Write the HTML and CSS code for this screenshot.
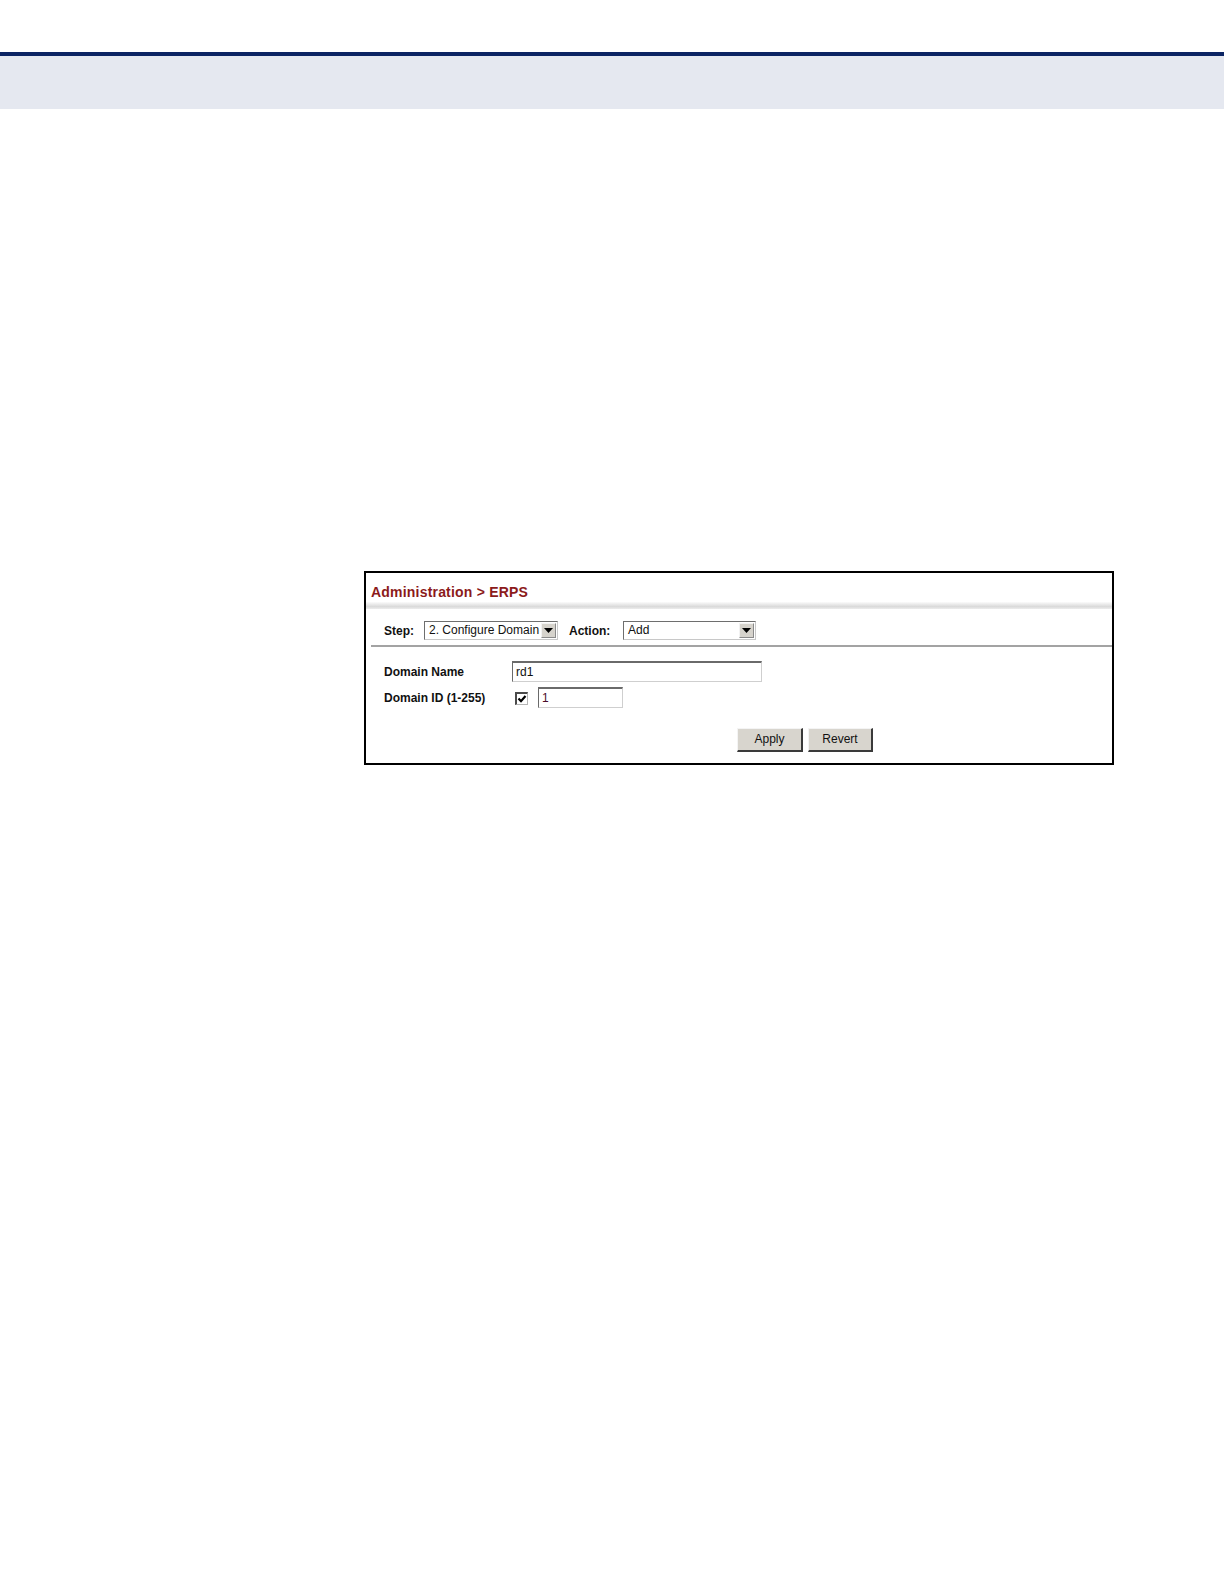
FILE: index.html
```html
<!DOCTYPE html>
<html>
<head>
<meta charset="utf-8">
<title>Administration &gt; ERPS</title>
<link rel="stylesheet" href="styles.css">
</head>
<body>
<div class="page-header"></div>
<div class="figure">
  <div class="title">Administration &gt; ERPS</div>
  <div class="title-shade"></div>
  <div class="step-row">
    <span class="lbl step-lbl">Step:</span>
    <div class="select sel-step">
      <span class="sel-text">2. Configure Domain</span>
      <span class="sel-arrow"><svg width="9" height="5" viewBox="0 0 9 5"><path d="M0 0H9L4.5 5Z" fill="#000"/></svg></span>
    </div>
    <span class="lbl action-lbl">Action:</span>
    <div class="select sel-action">
      <span class="sel-text">Add</span>
      <span class="sel-arrow"><svg width="9" height="5" viewBox="0 0 9 5"><path d="M0 0H9L4.5 5Z" fill="#000"/></svg></span>
    </div>
  </div>
  <div class="sep"></div>
  <div class="form">
    <div class="row">
      <span class="lbl field-lbl">Domain Name</span>
      <div class="input inp-name">rd1</div>
    </div>
    <div class="row row-id">
      <span class="lbl field-lbl">Domain ID (1-255)</span>
      <span class="check"><svg width="10" height="10" viewBox="0 0 10 10"><path d="M1.5 4.5L4 7.2L8.5 2" fill="none" stroke="#000" stroke-width="2.2"/></svg></span>
      <div class="input inp-id">1</div>
    </div>
  </div>
  <div class="buttons">
    <div class="btn btn-apply">Apply</div>
    <div class="btn btn-revert">Revert</div>
  </div>
</div>
</body>
</html>
```
FILE: styles.css
```css
html, body {
  margin: 0;
  padding: 0;
  background: #fff;
  font-family: "Liberation Sans", Arial, sans-serif;
}
.page-header {
  margin-top: 52px;
  border-top: 4px solid #0b2463;
  height: 53px;
  background: #e5e8f0;
}
.figure {
  box-sizing: border-box;
  margin-top: 462px;
  margin-left: 364px;
  width: 750px;
  height: 194px;
  border: 2px solid #000;
  display: flex;
  flex-direction: column;
}
.title {
  padding: 11px 0 0 5px;
  height: 18px;
  font-size: 14px;
  line-height: 17px;
  font-weight: bold;
  letter-spacing: 0.2px;
  color: #8b1a1a;
}
.title-shade {
  height: 7px;
  background: linear-gradient(#fbfbfb, #dadada 65%, #ececec);
}
.step-row {
  display: flex;
  align-items: center;
  padding: 12px 0 5px 18px;
  height: 19px;
}
.lbl {
  font-size: 12px;
  font-weight: bold;
  color: #111;
}
.step-lbl { width: 40px; }
.select {
  box-sizing: border-box;
  height: 19px;
  display: flex;
  align-items: stretch;
  border-top: 1px solid #6e6e6e;
  border-left: 1px solid #6e6e6e;
  border-right: 1px solid #c8c8c8;
  border-bottom: 1px solid #c8c8c8;
  background: #fff;
}
.sel-step { width: 134px; }
.sel-action { width: 133px; }
.sel-text {
  flex: 1;
  font-size: 12px;
  line-height: 16px;
  padding-left: 4px;
  color: #111;
  white-space: nowrap;
  overflow: hidden;
}
.sel-arrow {
  width: 15px;
  margin: 1px;
  display: flex;
  align-items: center;
  justify-content: center;
  background: #d6d3cc;
  border-top: 1px solid #f2f2f2;
  border-left: 1px solid #f2f2f2;
  border-right: 1px solid #8a8a8a;
  border-bottom: 1px solid #8a8a8a;
  box-sizing: border-box;
}
.action-lbl {
  margin-left: 11px;
  width: 54px;
}
.sep {
  margin-left: 5px;
  height: 2px;
  background: #a3a3a3;
}
.form {
  padding: 14px 0 0 18px;
  display: flex;
  flex-direction: column;
  gap: 5px;
}
.row {
  display: flex;
  align-items: center;
  height: 21px;
}
.field-lbl { width: 128px; }
.input {
  box-sizing: border-box;
  height: 21px;
  font-size: 12px;
  line-height: 18px;
  padding-left: 3px;
  border-top: 2px solid #6a6a6a;
  border-left: 1px solid #6a6a6a;
  border-right: 1px solid #cfcfcf;
  border-bottom: 1px solid #cfcfcf;
  color: #111;
  background: #fff;
}
.inp-name { width: 250px; }
.inp-id {
  width: 85px;
  margin-left: 10px;
  color: #4a0d2a;
}
.check {
  box-sizing: border-box;
  width: 13px;
  height: 13px;
  margin-left: 3px;
  margin-top: 2px;
  border-top: 2px solid #4a4a4a;
  border-left: 2px solid #4a4a4a;
  border-right: 1px solid #b5b5b5;
  border-bottom: 1px solid #b5b5b5;
  display: flex;
  align-items: center;
  justify-content: center;
  background: #fff;
}
.buttons {
  display: flex;
  gap: 5px;
  padding: 20px 0 0 371px;
}
.btn {
  box-sizing: border-box;
  height: 24px;
  font-size: 12px;
  line-height: 21px;
  text-align: center;
  color: #111;
  background: #d8d5ce;
  border-top: 1px solid #f4f4f4;
  border-left: 1px solid #f4f4f4;
  border-right: 2px solid #3a3a3a;
  border-bottom: 2px solid #3a3a3a;
}
.btn-apply { width: 66px; }
.btn-revert { width: 65px; }
```
